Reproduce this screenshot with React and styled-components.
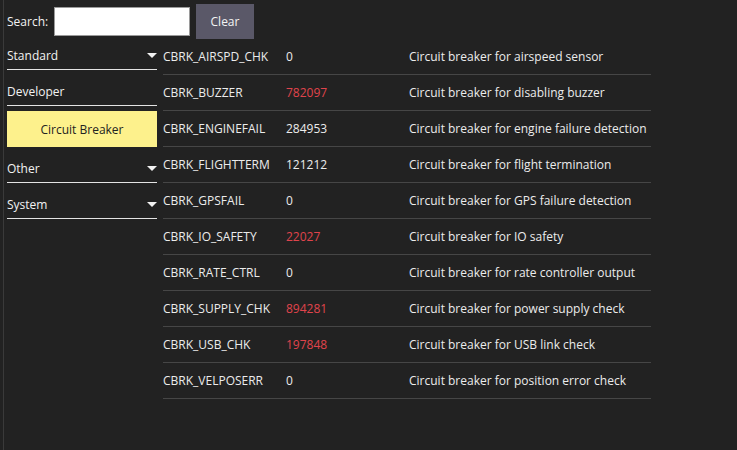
import React from "react";
import styled, { createGlobalStyle } from "styled-components";

const Global = createGlobalStyle`
  html, body { margin: 0; padding: 0; background: #222222; }
  body { font-family: "Open Sans", "Noto Sans", sans-serif; font-size: 12px; color: #f0f0f0; }
  * { box-sizing: border-box; }
`;

const Root = styled.div`
  width: 737px;
  height: 450px;
  padding-left: 3px;
  background: #222222;
  overflow: hidden;
`;

const Frame = styled.div`
  height: 100%;
  border-left: 1px solid #3a3a3a;
  padding-left: 3px;
  display: flex;
  flex-direction: column;
`;

const Header = styled.div`
  height: 39px;
  padding-top: 4px;
  display: flex;
  align-items: center;
`;

const Label = styled.span`
  width: 47px;
  line-height: 17px;
  color: #f2f2f2;
`;

const SearchInput = styled.input`
  width: 136px;
  height: 29px;
  margin: 0;
  padding: 0 4px;
  background: #ffffff;
  border: 1px solid #9a9a9a;
  outline: none;
`;

const ClearButton = styled.button`
  margin-left: 6px;
  width: 58px;
  height: 35px;
  border: none;
  background: #5a5868;
  color: #f4f4f4;
  font: inherit;
  padding: 0;
`;

const Body = styled.div`
  display: flex;
  gap: 6px;
  align-items: flex-start;
`;

const Panel = styled.div`
  width: 150px;
  display: flex;
  flex-direction: column;
`;

const Category = styled.div`
  height: ${(p) => (p.$short ? 31 : 36)}px;
  border-bottom: 1px solid #e4e4e4;
  display: flex;
  align-items: flex-end;
  justify-content: space-between;
  padding-bottom: 5px;
  line-height: 17px;
  color: #f2f2f2;
`;

const Arrow = styled.span`
  width: 0;
  height: 0;
  margin-bottom: 6px;
  border-left: 5px solid transparent;
  border-right: 5px solid transparent;
  border-top: 5px solid #f2f2f2;
`;

const Selected = styled.div`
  margin-top: 5px;
  height: 36px;
  background: #fdf18c;
  color: #222222;
  display: flex;
  align-items: center;
  justify-content: center;
`;

const Table = styled.div`
  width: 488px;
  display: flex;
  flex-direction: column;
`;

const Row = styled.div`
  height: 36px;
  display: grid;
  grid-template-columns: 123px 123px 1fr;
  align-items: center;
  border-bottom: 1px solid #464646;
  color: #ececec;
  line-height: 17px;
  white-space: nowrap;
`;

const Value = styled.span`
  color: ${(p) => (p.$changed ? "#e0444c" : "#ececec")};
`;

const rows = [
  ["CBRK_AIRSPD_CHK", "0", "Circuit breaker for airspeed sensor"],
  ["CBRK_BUZZER", "782097", "Circuit breaker for disabling buzzer", true],
  ["CBRK_ENGINEFAIL", "284953", "Circuit breaker for engine failure detection"],
  ["CBRK_FLIGHTTERM", "121212", "Circuit breaker for flight termination"],
  ["CBRK_GPSFAIL", "0", "Circuit breaker for GPS failure detection"],
  ["CBRK_IO_SAFETY", "22027", "Circuit breaker for IO safety", true],
  ["CBRK_RATE_CTRL", "0", "Circuit breaker for rate controller output"],
  ["CBRK_SUPPLY_CHK", "894281", "Circuit breaker for power supply check", true],
  ["CBRK_USB_CHK", "197848", "Circuit breaker for USB link check", true],
  ["CBRK_VELPOSERR", "0", "Circuit breaker for position error check"],
];

export default function App() {
  return (
    <Root>
      <Global />
      <Frame>
        <Header>
          <Label>Search:</Label>
          <SearchInput />
          <ClearButton>Clear</ClearButton>
        </Header>
        <Body>
          <Panel>
            <Category $short>
              <span>Standard</span>
              <Arrow />
            </Category>
            <Category>
              <span>Developer</span>
            </Category>
            <Selected>Circuit Breaker</Selected>
            <Category>
              <span>Other</span>
              <Arrow />
            </Category>
            <Category>
              <span>System</span>
              <Arrow />
            </Category>
          </Panel>
          <Table>
            {rows.map(([name, value, desc, changed]) => (
              <Row key={name}>
                <span>{name}</span>
                <Value $changed={changed}>{value}</Value>
                <span>{desc}</span>
              </Row>
            ))}
          </Table>
        </Body>
      </Frame>
    </Root>
  );
}
